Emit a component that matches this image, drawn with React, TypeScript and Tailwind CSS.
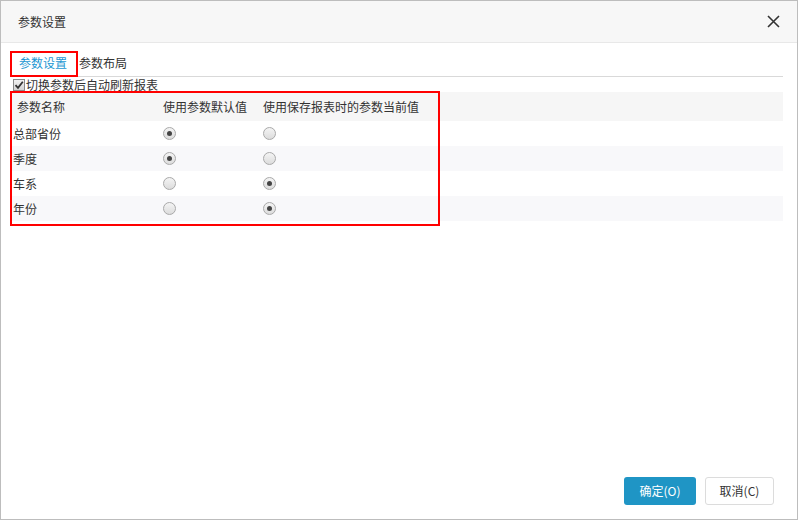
import React from "react";

interface Param {
  name: string;
  useDefault: boolean;
}

const params: Param[] = [
  { name: "总部省份", useDefault: true },
  { name: "季度", useDefault: true },
  { name: "车系", useDefault: false },
  { name: "年份", useDefault: false },
];

const Radio = ({ checked }: { checked: boolean }) => (
  <span className="w-[13px] h-[13px] rounded-full border border-[#a9a9a9] bg-gradient-to-b from-[#f4f4f4] to-[#dcdcdc] flex items-center justify-center">
    {checked && <span className="w-[5px] h-[5px] rounded-full bg-[#444]" />}
  </span>
);

const App = () => {
  return (
    <div
      className="relative w-[798px] h-[520px] bg-white border border-[#bdbdbd] flex flex-col text-[12px] text-[#333]"
      style={{ fontFamily: '"Noto Sans CJK SC", "Noto Sans", sans-serif' }}
    >
      {/* header */}
      <div className="h-[42px] shrink-0 bg-[#f7f7f7] border-b border-[#e8e8e8] flex items-center justify-between pl-[17px] pr-[17px]">
        <span className="text-[12px] text-[#333]">参数设置</span>
        <svg width="13" height="13" viewBox="0 0 13 13" className="text-[#333]">
          <path d="M1 1L12 12M12 1L1 12" stroke="currentColor" strokeWidth="1.6" />
        </svg>
      </div>

      {/* body */}
      <div className="flex-1 pl-[9px] pr-[14px]">
        <div className="h-[34px] border-b border-[#d9d9d9] flex items-start pt-[11px]">
          <span className="pl-[9px] pr-[12px] text-[#1c97d2] leading-[18px]">参数设置</span>
          <span className="leading-[18px]">参数布局</span>
        </div>

        <div className="h-[15px] flex items-center pl-[3px] gap-[1px]">
          <span className="w-[12px] h-[12px] border border-[#8a8a8a] bg-gradient-to-b from-[#f2f2f2] to-[#d4d4d4] flex items-center justify-center">
            <svg width="10" height="10" viewBox="0 0 10 10">
              <path d="M1.5 5.2L4 7.8L8.8 1.8" stroke="#333" strokeWidth="1.8" fill="none" />
            </svg>
          </span>
          <span className="leading-[15px]">切换参数后自动刷新报表</span>
        </div>

        <div>
          <div className="h-[29px] bg-[#f6f6f6] flex items-center">
            <span className="w-[153px] pl-[7px]">参数名称</span>
            <span className="w-[100px]">使用参数默认值</span>
            <span>使用保存报表时的参数当前值</span>
          </div>
          {params.map((p, i) => (
            <div
              key={p.name}
              className={`h-[25px] flex items-center ${i % 2 === 1 ? "bg-[#f8f8fa]" : "bg-white"}`}
            >
              <span className="w-[153px] pl-[3px]">{p.name}</span>
              <span className="w-[100px]">
                <Radio checked={p.useDefault} />
              </span>
              <span>
                <Radio checked={!p.useDefault} />
              </span>
            </div>
          ))}
        </div>
      </div>

      {/* footer */}
      <div className="shrink-0 flex justify-end gap-[9px] pr-[23px] pb-[14px]">
        <button className="w-[72px] h-[28px] rounded-[3px] bg-[#1f95c5] text-white text-[12px]">
          确定(O)
        </button>
        <button className="w-[69px] h-[28px] rounded-[3px] border border-[#dcdcdc] bg-white text-[#333] text-[12px]">
          取消(C)
        </button>
      </div>

      {/* annotation boxes */}
      <div className="absolute left-[9px] top-[50px] w-[68px] h-[26px] border-2 border-[#ff0000] pointer-events-none" />
      <div className="absolute left-[9px] top-[90px] w-[430px] h-[135px] border-2 border-[#ff0000] pointer-events-none" />
    </div>
  );
};

export default App;
